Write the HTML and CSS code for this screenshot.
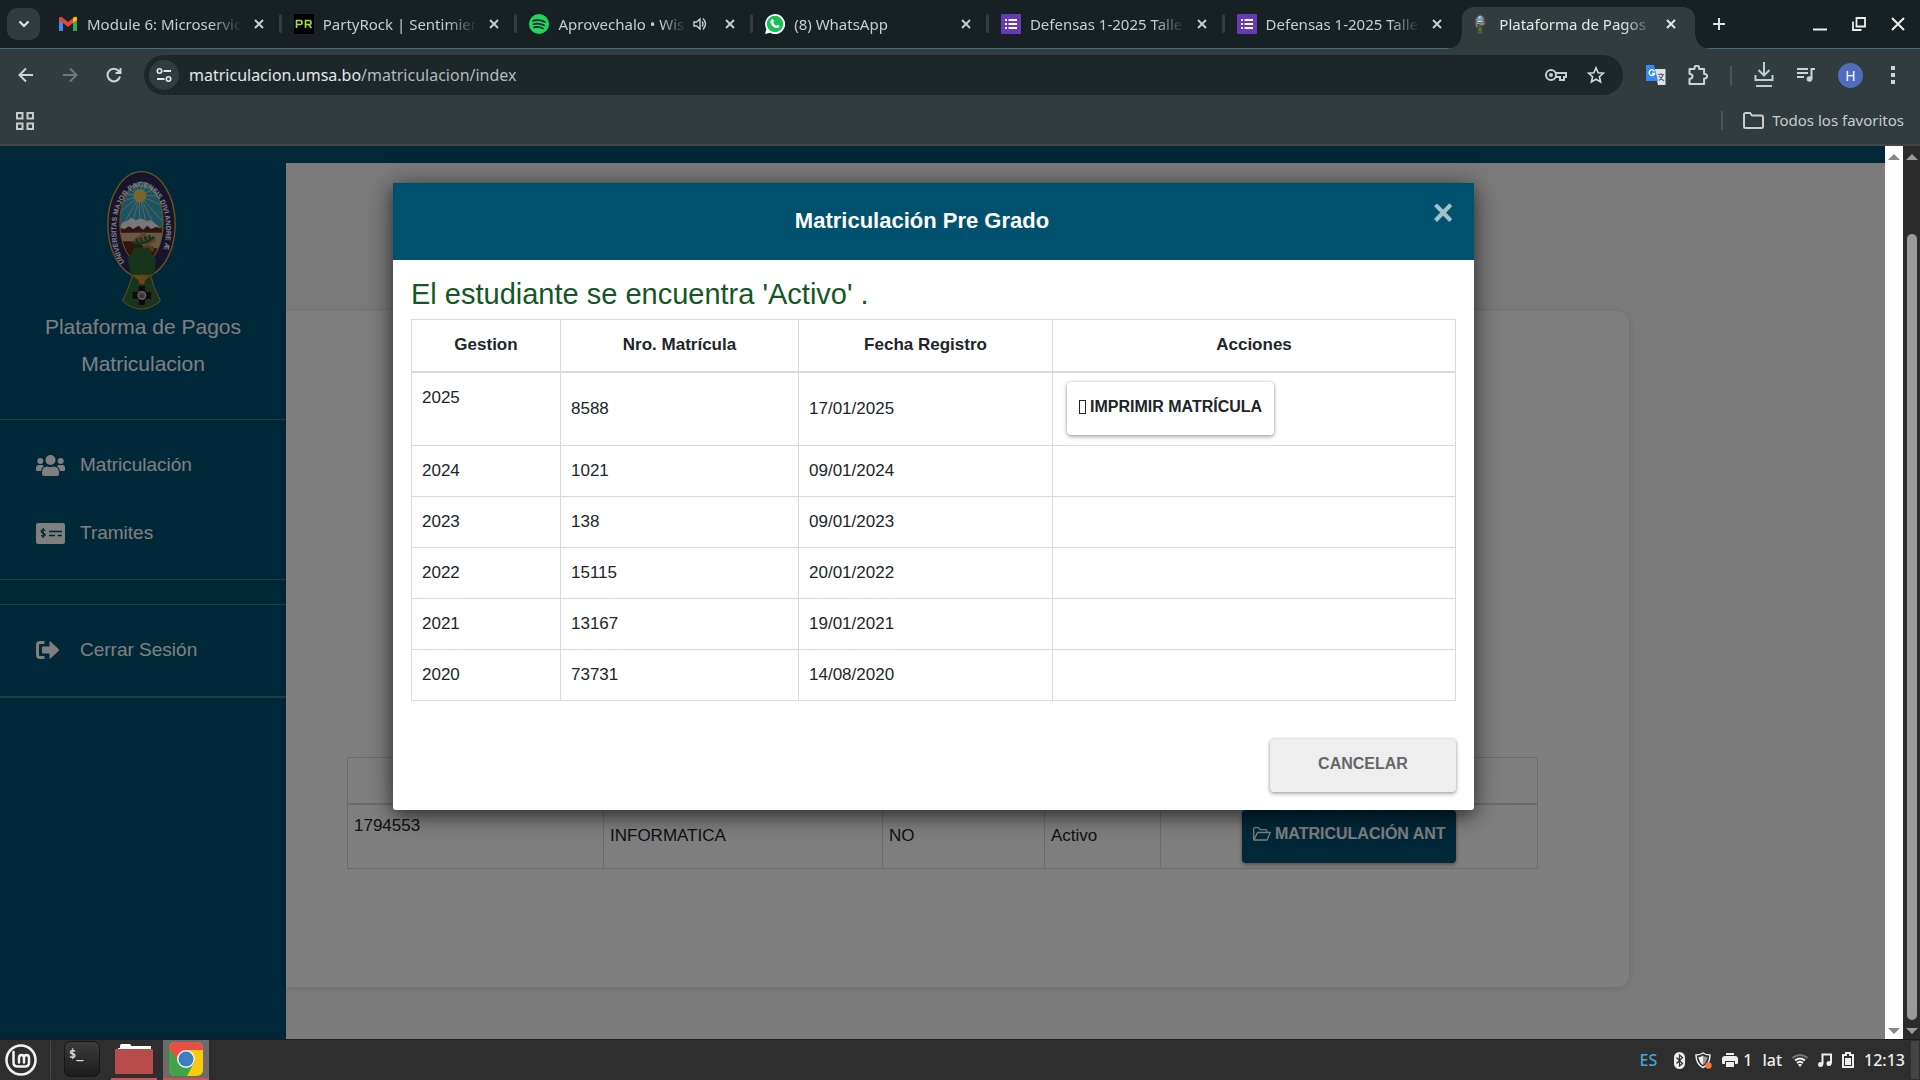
FILE: index.html
```html
<!DOCTYPE html>
<html lang="es">
<head>
<meta charset="utf-8">
<title>Plataforma de Pagos</title>
<link rel="stylesheet" href="styles.css">
</head>
<body>
<svg class="defs" aria-hidden="true">
  <symbol id="i-x" viewBox="0 0 10 10"><path d="M1 1l8 8M9 1l-8 8" stroke="currentColor" stroke-width="2" fill="none"/></symbol>
  <symbol id="i-forms" viewBox="0 0 20 20"><rect width="20" height="20" rx="1" fill="#673ab7"/><path d="M4 5h2v2H4zM7.500 5H16v2H7.500zM4 9h2v2H4zM7.500 9H16v2H7.500zM4 13h2v2H4zM7.500 13H16v2H7.500z" fill="#fff"/></symbol>
  <symbol id="i-crest" viewBox="0 0 206 417">
    <ellipse cx="103" cy="160" rx="101" ry="158" fill="#2f2a5c" stroke="#d8a93a" stroke-width="4"/>
    <clipPath id="oval"><ellipse cx="103" cy="155" rx="65" ry="122"/></clipPath>
    <g clip-path="url(#oval)">
      <rect x="30" y="30" width="150" height="140" fill="#3aa6c4"/>
      <path d="M98 74L30 30M98 74L60 20M98 74L82 20M98 74L112 20M98 74L135 20M98 74L170 40M98 74L180 75M98 74L180 110M98 74L165 150M98 74L140 160M98 74L118 160M98 74L96 160M98 74L75 160M98 74L52 155M98 74L30 130M98 74L25 98M98 74L25 65" stroke="#c9d8c0" stroke-width="2.500"/>
      <circle cx="98" cy="74" r="19" fill="#f0cf5a"/>
      <rect x="30" y="166" width="150" height="120" fill="#d9ae84"/>
      <path d="M30 178l14-22 16-7 12-8 14 9 16-8 14 8 16-3 18 14 14 8v16H30z" fill="#5e2b23"/>
      <path d="M36 170l10-16 14-5 12-9 14 8 16-6 14 7 16-2 18 15 14 10-18-4-14 6-12-10-12 12-14-12-16 10-12-8-14 8z" fill="#f1efee"/>
      <path d="M30 211h60l22 16 56 8v60H30z" fill="#5e2b23"/>
      <path d="M72 212l38-30 10 14 28 8-4 12-40 6z" fill="#b98a60"/>
      <path d="M78 215q34 8 64-18M92 214l-4-12M104 212l-4-12M116 208l-2-12M128 203l-2-10" stroke="#2c6a2c" stroke-width="8" fill="none"/>
      <path d="M102 232l16-12 22 6v16z" fill="#a5724d"/>
    </g>
    <ellipse cx="103" cy="155" rx="65" ry="122" fill="none" stroke="#d8a93a" stroke-width="3"/>
    <path id="ring" d="M52 274A75 130 0 1 1 152 274" fill="none"/>
    <text class="crest-text"><textPath href="#ring">UNIVERSITAS MAJOR PACENSIS DIVI ANDRE Æ</textPath></text>
    <path d="M60 262l8-8 14-24h44q6 12 10 26l10 6-4 46-32 6-36-2-2-4z" fill="#2d6b35"/>
    <path d="M76 313h54q8 36 30 77-58 48-114 0 18-36 30-77z" fill="#2d6b35" stroke="#c99b34" stroke-width="3"/>
    <path d="M76 314h54l-16 14-4 12H98l-4-12z" fill="#cf8a2e"/>
    <path d="M94 344h20v18h18v22h-18v18H94v-18H76v-22h18z" fill="#15151f" stroke="#c33" stroke-width="2" stroke-dasharray="5 9"/>
    <circle cx="104" cy="373" r="13" fill="#e8dcd0"/><circle cx="104" cy="373" r="10" fill="#5aa0b8"/><path d="M96 374q8-10 16 0l-3 7h-10z" fill="#b4552f"/>
  </symbol>
</svg>

<header class="browser">
  <div class="tabstrip">
    <button class="tab-search" aria-label="Buscar pestañas"><svg width="12" height="8" viewBox="0 0 12 8"><path d="M1.500 1.500L6 6l4.500-4.500" stroke="#e3e7e8" stroke-width="2.200" fill="none"/></svg></button>
    <nav class="tabs">
      <div class="tab"><svg class="fav" viewBox="0 0 20 20"><path d="M1 17V4l4 3v10z" fill="#4285f4"/><path d="M15 17V7l4-3v13z" fill="#34a853"/><path d="M1 4.500Q1 2 4 3.200L10 8l6-4.800Q19 2 19 4.500V6l-9 7-9-7z" fill="#ea4335"/><path d="M15 4l1-.800Q19 2 19 4.500V6l-4 3z" fill="#fbbc04"/></svg><span class="tab-title">Module 6: Microservic</span><button class="tab-x" aria-label="Cerrar"><svg><use href="#i-x"/></svg></button></div>
      <div class="tab"><svg class="fav" viewBox="0 0 20 20"><rect width="20" height="20" fill="#000"/><path d="M2.500 14V6.500h4q1.500 0 1.500 2t-1.500 2h-4M11.500 14V6.500h4q1.500 0 1.500 2t-1.500 2h-4M14.500 10.500l3 3.500" stroke="#a8e03c" stroke-width="1.600" fill="none"/></svg><span class="tab-title">PartyRock | Sentimien</span><button class="tab-x" aria-label="Cerrar"><svg><use href="#i-x"/></svg></button></div>
      <div class="tab"><svg class="fav" viewBox="0 0 20 20"><circle cx="10" cy="10" r="10" fill="#1ed760"/><path d="M4 6.800q6.500-1.800 12 1.200M4.500 10.200q5.500-1.500 10.500 1.100M5 13.400q4.500-1.200 9 1" stroke="#172124" stroke-width="1.700" fill="none" stroke-linecap="round"/></svg><span class="tab-title">Aprovechalo • Wis</span><svg class="audio" viewBox="0 0 14 14"><path d="M1 5h2.500L7 2v10L3.500 9H1zM9 4.500q2 2.500 0 5M10 1.500q5 5 0 11" stroke="#c7cdcf" stroke-width="1.400" fill="none"/></svg><button class="tab-x" aria-label="Cerrar"><svg><use href="#i-x"/></svg></button></div>
      <div class="tab"><svg class="fav" viewBox="0 0 20 20"><path d="M0 20l1.400-5A10 10 0 1 1 5 18.700z" fill="#fff"/><circle cx="10" cy="10" r="8.200" fill="#12c34f"/><path d="M6.500 5.500q1.500-1 2 .500l.500 1.500-.800 1.200q1 2 3 3l1.200-1 2 1q.500 2-2 2.300-5 .200-7-5.500-.200-2 1.100-3z" fill="#fff"/></svg><span class="tab-title">(8) WhatsApp</span><button class="tab-x" aria-label="Cerrar"><svg><use href="#i-x"/></svg></button></div>
      <div class="tab"><svg class="fav"><use href="#i-forms"/></svg><span class="tab-title">Defensas 1-2025 Talle</span><button class="tab-x" aria-label="Cerrar"><svg><use href="#i-x"/></svg></button></div>
      <div class="tab no-sep"><svg class="fav"><use href="#i-forms"/></svg><span class="tab-title">Defensas 1-2025 Talle</span><button class="tab-x" aria-label="Cerrar"><svg><use href="#i-x"/></svg></button></div>
      <div class="tab active"><svg class="fav"><use href="#i-crest"/></svg><span class="tab-title">Plataforma de Pagos</span><button class="tab-x" aria-label="Cerrar"><svg><use href="#i-x"/></svg></button></div>
    </nav>
    <button class="new-tab" aria-label="Nueva pestaña"><svg width="14" height="14" viewBox="0 0 14 14"><path d="M7 1v12M1 7h12" stroke="#d9dedf" stroke-width="2"/></svg></button>
    <div class="win-buttons">
      <button aria-label="Minimizar"><svg width="14" height="14" viewBox="0 0 14 14"><path d="M0 12.500h14" stroke="#eee" stroke-width="2"/></svg></button>
      <button aria-label="Restaurar"><svg width="14" height="14" viewBox="0 0 14 14"><path d="M4.500 1h8.500v8.500H4.500zM1 4.500V13h8.500" stroke="#eee" stroke-width="1.800" fill="none"/></svg></button>
      <button aria-label="Cerrar ventana"><svg width="14" height="14" viewBox="0 0 14 14"><path d="M1 1l12 12M13 1L1 13" stroke="#eee" stroke-width="2"/></svg></button>
    </div>
  </div>
  <div class="toolbar">
    <div class="nav-buttons">
      <button aria-label="Atrás"><svg width="16" height="16" viewBox="0 0 16 16"><path d="M15 8H2M8 1.500L1.500 8 8 14.500" stroke="#c8d6d8" stroke-width="2" fill="none"/></svg></button>
      <button aria-label="Adelante"><svg width="16" height="16" viewBox="0 0 16 16"><path d="M1 8h13M8 1.500L14.500 8 8 14.500" stroke="#6f787a" stroke-width="2" fill="none"/></svg></button>
      <button aria-label="Recargar"><svg width="16" height="16" viewBox="0 0 16 16"><path d="M14 9.500A6.300 6.300 0 1 1 12.700 4L14 5.500M14.500 1v5h-5" stroke="#c8d6d8" stroke-width="2" fill="none"/></svg></button>
    </div>
    <div class="omnibox">
      <button class="site-info" aria-label="Información del sitio"><svg width="16" height="16" viewBox="0 0 16 16"><path d="M7.500 4H15M1 12h7.500" stroke="#e3e7e8" stroke-width="1.800"/><circle cx="3.500" cy="4" r="2.200" stroke="#e3e7e8" stroke-width="1.600" fill="none"/><circle cx="12.500" cy="12" r="2.200" stroke="#e3e7e8" stroke-width="1.600" fill="none"/></svg></button>
      <a class="url" href="#">matriculacion.umsa.bo<span>/matriculacion/index</span></a>
      <svg width="22" height="14" viewBox="0 0 22 14"><circle cx="6" cy="7" r="5" stroke="#c7cdcf" stroke-width="2" fill="none"/><circle cx="6" cy="7" r="2" fill="#c7cdcf"/><path d="M10.500 5H21v4h-2v3h-4V9h-4.500" stroke="#c7cdcf" stroke-width="2" fill="none"/></svg>
      <svg width="18" height="18" viewBox="0 0 18 18"><path d="M9 1.800l2.100 4.900 5.300.500-4 3.500 1.200 5.200L9 13.200l-4.600 2.700 1.200-5.200-4-3.500 5.300-.500z" stroke="#d5dadb" stroke-width="1.600" fill="none"/></svg>
    </div>
    <div class="tools">
      <svg width="20" height="20" viewBox="0 0 20 20"><path d="M8 4h11.500v16H12z" fill="#dfe3e6"/><path d="M0 0h8l4 16H0z" fill="#2f8cf0"/><path d="M8.500 6.500A2.800 2.800 0 1 0 8.600 8.500H6" stroke="#fff" stroke-width="1.400" fill="none"/><path d="M12 9.500h6M15 8v1.500M17 9.500q-1 4-4 6M13 11q2 3 5 5" stroke="#667" stroke-width="1.200" fill="none"/></svg>
      <svg width="20" height="20" viewBox="0 0 20 20"><path d="M1.500 4h5V3a2.300 2.300 0 0 1 4.600 0v1h5v5h.700a2.300 2.300 0 0 1 0 4.600h-.700V19H1.500v-5q3-.500 3-2.700T1.500 8.700z" stroke="#c8d6d8" stroke-width="2" fill="none" stroke-linejoin="round"/></svg>
      <i class="bar"></i>
      <svg width="20" height="26" viewBox="0 0 20 26"><path d="M10 0v13M4.500 8l5.500 5.500L15.500 8M1.500 13v5h17v-5M2 24h16" stroke="#b9cfd4" stroke-width="2" fill="none"/></svg>
      <svg width="20" height="16" viewBox="0 0 20 16"><path d="M1 2h11M1 6h11M1 10h7" stroke="#c8d6d8" stroke-width="2"/><path d="M15.500 12V2H19" stroke="#c8d6d8" stroke-width="2" fill="none"/><circle cx="13.500" cy="12" r="2.800" fill="#c8d6d8"/></svg>
      <span class="avatar">H</span>
      <svg class="more" width="4" height="18" viewBox="0 0 4 18"><path d="M0 0h4v4H0zM0 7h4v4H0zM0 14h4v4H0z" fill="#c8d6d8"/></svg>
    </div>
  </div>
  <div class="bookmarks">
    <svg width="18" height="18" viewBox="0 0 18 18"><path d="M1 1h5.500v5.500H1zM11.500 1H17v5.500h-5.500zM1 11.500h5.500V17H1zM11.500 11.500H17V17h-5.500z" stroke="#c7cdcf" stroke-width="2" fill="none"/></svg>
    <a class="all-favs" href="#"><svg width="21" height="17" viewBox="0 0 21 17"><path d="M1 14.500V2.500Q1 1 2.500 1H7l2 2.500h9.500q1.500 0 1.500 1.500v9.500q0 1.500-1.500 1.500h-16Q1 16 1 14.500z" stroke="#c7cdcf" stroke-width="2" fill="none"/></svg>Todos los favoritos</a>
  </div>
</header>

<div class="viewport">
  <div class="page">
    <div class="topbar"></div>
    <div class="columns">
      <aside class="sidebar">
        <div class="brand">
          <svg class="crest"><use href="#i-crest"/></svg>
          <span>Plataforma de Pagos<br>Matriculacion</span>
        </div>
        <nav class="menu">
          <a href="#"><svg width="29" height="21" viewBox="0 0 29 21"><g fill="#fff"><circle cx="14.500" cy="5" r="5"/><circle cx="4.300" cy="6" r="3"/><circle cx="24.700" cy="6" r="3"/><path d="M6 17.500q0-6 5.500-6 3 1.200 6 0 5.500 0 5.500 6V19q0 2-2 2H8q-2 0-2-2zM0 13q0-3 3-3h3.500l1.500 1.200Q5.500 12.500 5 16H1q-1 0-1-1zM29 13q0-3-3-3h-3.500L21 11.200q2.500 1.300 3 4.800h4q1 0 1-1z"/></g></svg>Matriculación</a>
          <a href="#"><svg width="29" height="21" viewBox="0 0 29 21"><rect width="29" height="21" rx="2" fill="#fff"/><path d="M13 8.500h13M13 12.500h6M21.500 12.500H26M9.300 7.500Q7 6.200 5.500 7.500q-1 1.600 1.500 2.500 2.800 1 1.800 2.500-1.600 1.300-3.800 0M7.200 5v10" stroke="#005170" stroke-width="1.400" fill="none"/></svg>Tramites</a>
        </nav>
        <nav class="menu session">
          <a href="#"><svg width="29" height="18" viewBox="0 0 29 18"><path d="M8.500 1.500H4Q1.500 1.500 1.500 4v10q0 2.500 2.500 2.500h4.500" stroke="#fff" stroke-width="3" fill="none"/><path d="M7 5.500h6.500V1q0-1 1-.500l8 7.500q1 1 0 2l-8 7.500q-1 .500-1-.500v-4.500H7q-1 0-1-1v-5q0-1 1-1z" fill="#fff"/></svg>Cerrar Sesión</a>
        </nav>
      </aside>
      <main class="main">
        <section class="card">
          <table class="careers">
            <colgroup><col class="k1"><col class="k2"><col class="k3"><col class="k4"><col class="k5"></colgroup>
            <thead><tr><th></th><th></th><th></th><th></th><th></th></tr></thead>
            <tbody><tr><td class="top">1794553</td><td>INFORMATICA</td><td>NO</td><td>Activo</td><td class="act"><button class="btn btn-primary"><svg width="18" height="14" viewBox="0 0 18 14"><path d="M.700 12.500v-11l.800-.800h4l1.500 2h6l.800.800V5.500M.900 13l3.600-7.500H17.300L14 13z" stroke="#fff" stroke-width="1.300" fill="none" stroke-linejoin="round"/></svg>MATRICULACIÓN ANT</button></td></tr></tbody>
          </table>
        </section>
      </main>
    </div>
    <div class="backdrop">
      <section class="modal" role="dialog" aria-labelledby="modal-title">
        <header class="modal-head">
          <h4 id="modal-title">Matriculación Pre Grado</h4>
          <button class="close" aria-label="Cerrar">×</button>
        </header>
        <div class="modal-body">
          <h3 class="status">El estudiante se encuentra 'Activo' .</h3>
          <table class="history">
            <colgroup><col class="c1"><col class="c2"><col class="c3"><col class="c4"></colgroup>
            <thead><tr><th>Gestion</th><th>Nro. Matrícula</th><th>Fecha Registro</th><th>Acciones</th></tr></thead>
            <tbody>
              <tr><td class="top">2025</td><td>8588</td><td>17/01/2025</td><td class="act"><button class="btn btn-white"><i class="glyph"></i>IMPRIMIR MATRÍCULA</button></td></tr>
              <tr><td>2024</td><td>1021</td><td>09/01/2024</td><td></td></tr>
              <tr><td>2023</td><td>138</td><td>09/01/2023</td><td></td></tr>
              <tr><td>2022</td><td>15115</td><td>20/01/2022</td><td></td></tr>
              <tr><td>2021</td><td>13167</td><td>19/01/2021</td><td></td></tr>
              <tr><td>2020</td><td>73731</td><td>14/08/2020</td><td></td></tr>
            </tbody>
          </table>
        </div>
        <footer class="modal-foot"><button class="btn btn-cancel">CANCELAR</button></footer>
      </section>
    </div>
  </div>
  <div class="scroll light"><i class="up"></i><i class="down"></i></div>
  <div class="scroll dark"><i class="up"></i><i class="thumb"></i><i class="down"></i></div>
</div>

<footer class="taskbar">
  <svg class="mint" width="34" height="34" viewBox="0 0 34 34"><circle cx="17" cy="17" r="14.500" stroke="#f2f2f2" stroke-width="2.500" fill="none"/><path d="M9.500 9v10.500q0 4 4 4h7.500q4 0 4-4V15q0-3-2.500-3T20 15v4.500M20 15q0-3-2.500-3T15 15v4.500" stroke="#f2f2f2" stroke-width="2.500" fill="none" stroke-linecap="round"/></svg>
  <i class="task-sep"></i>
  <div class="apps">
    <button class="app" aria-label="Terminal"><svg width="36" height="36" viewBox="0 0 36 36"><defs><linearGradient id="tg" x2="0" y2="1"><stop stop-color="#3d3d3d"/><stop offset="1" stop-color="#1b1b1b"/></linearGradient></defs><rect x=".500" y=".500" width="35" height="35" rx="6" fill="url(#tg)" stroke="#161616"/><text x="5" y="17" class="prompt">$_</text></svg></button>
    <button class="app running" aria-label="Archivos"><svg width="38" height="32" viewBox="0 0 38 32"><path d="M5 2.500L6 1h9l1.500 2H36v6H3V5h2z" fill="#fff"/><rect y="6" width="38" height="25" rx="1" fill="#b84c4a"/></svg></button>
    <button class="app running current" aria-label="Chrome"><svg width="34" height="34" viewBox="0 0 34 34"><clipPath id="sq"><rect width="34" height="34" rx="6"/></clipPath><g clip-path="url(#sq)"><rect width="34" height="34" fill="#fbcb0a"/><path d="M0 6v28h18l8-15-9-2z" fill="#3fa548"/><path d="M0 0h34v8H17L10 20 0 6z" fill="#ea4f43"/><circle cx="17" cy="17" r="9" fill="#f4f4f4"/><circle cx="17" cy="17" r="7.500" fill="#3c7fc0"/></g></svg></button>
  </div>
  <div class="tray">
    <span class="lang">ES</span>
    <svg width="11" height="17" viewBox="0 0 11 17"><rect width="11" height="17" rx="5.500" fill="#eee"/><path d="M2.500 5.500l6 6-3 2.500V3l3 2.500-6 6" stroke="#2e2e2e" stroke-width="1.200" fill="none"/></svg>
    <svg width="17" height="17" viewBox="0 0 17 17"><path d="M8 1q3 2 7 2 0 9-7 12.500Q1 12 1 3q4 0 7-2z" stroke="#eee" stroke-width="1.500" fill="none"/><path d="M8 3.500v9.500Q4 10 3.500 5 6 5 8 3.500z" fill="#eee"/><path d="M8 3.500V13q4-3 4.500-8Q10 5 8 3.500z" fill="#999"/><circle cx="13.500" cy="13.500" r="3.200" fill="#f47a3c"/></svg>
    <span class="printer"><svg width="16" height="14" viewBox="0 0 16 14"><path d="M4 0h8v2H4zM0 6q0-3 3-3h10q3 0 3 3v4q0 1-1 1h-2V8H3v3H1q-1 0-1-1zM4 9h8v5H4z" fill="#eee"/></svg>1</span>
    <span>lat</span>
    <svg width="16" height="13" viewBox="0 0 16 13"><path d="M.500 4Q8-2 15.500 4" stroke="#777" stroke-width="2" fill="none"/><path d="M3 6.500q5-4 10 0M5 9q3-2.500 6 0" stroke="#eee" stroke-width="1.800" fill="none"/><path d="M6 10.500q2-1.500 4 0L8 13z" fill="#eee"/></svg>
    <svg width="14" height="14" viewBox="0 0 14 14"><path d="M4.500 11.500V1.500h8.500v9" stroke="#eee" stroke-width="2" fill="none"/><circle cx="2.500" cy="11.500" r="2.500" fill="#eee"/><circle cx="11" cy="10.500" r="2.500" fill="#eee"/></svg>
    <svg width="12" height="16" viewBox="0 0 12 16"><path d="M1 3h3V1h4v2h3v12H1z" stroke="#eee" stroke-width="2" fill="none"/><path d="M3 6h6v7H3z" fill="#eee"/></svg>
    <time>12:13</time>
  </div>
  <i class="show-desktop"></i>
</footer>
</body>
</html>
```
FILE: styles.css
```css
* { box-sizing: border-box; }
body { margin: 0; height: 100vh; display: flex; flex-direction: column; overflow: hidden; background: #2e2e2e; font-family: "Liberation Sans", Arial, sans-serif; }
button { flex: none; padding: 0; border: 0; background: none; font: inherit; color: inherit; display: flex; align-items: center; justify-content: center; }
a { color: inherit; text-decoration: none; }
svg { flex: none; display: block; }
.defs { position: absolute; width: 0; height: 0; }

/* browser chrome */
.browser { flex: none; background: #323c3f; color: #c7cdcf; font-family: "Noto Sans", sans-serif; border-bottom: 2px solid #454545; }
.tabstrip { height: 49px; display: flex; align-items: flex-start; background: #172124; border-bottom: 1px solid #3b6f86; }
.tab-search { width: 33px; height: 32px; margin: 8px 5px 0 7px; border-radius: 10px; background: #323c3f; }
.tabs { flex: 1; min-width: 0; display: flex; height: 49px; }
.tab { position: relative; flex: 1; min-width: 0; display: flex; align-items: center; padding: 0 17px 1px 13px; font-size: 15px; }
.tab::after { content: ""; position: absolute; right: -1px; top: 14px; width: 3px; height: 19px; border-radius: 2px; background: #323c3f; }
.tab.no-sep::after { display: none; }
.fav { width: 20px; height: 20px; margin-right: 9px; }
.tab-title { flex: 1; min-width: 0; overflow: hidden; white-space: nowrap; line-height: 24px; -webkit-mask-image: linear-gradient(90deg, #000 80%, transparent); mask-image: linear-gradient(90deg, #000 80%, transparent); }
.audio { width: 14px; height: 14px; margin-left: 6px; }
.audio + .tab-x { margin-left: 18px; }
.tab-x { width: 10px; height: 10px; margin-left: 12px; }
.tab-x svg { width: 10px; height: 10px; }
.tab.active { height: 42px; margin-top: 7px; padding: 0 19px 8px 8px; margin-left: 3px; margin-right: 5px; border-radius: 12px 12px 0 0; background: #323c3f; color: #e3e7e8; }
.tab.active::before, .tab.active::after { content: ""; position: absolute; top: auto; bottom: 0; width: 14px; height: 14px; border-radius: 0; background: radial-gradient(circle at 0 0, transparent 13px, #323c3f 14px); }
.tab.active::before { left: -14px; }
.tab.active::after { left: auto; right: -14px; background: radial-gradient(circle at 100% 0, transparent 13px, #323c3f 14px); }
.new-tab { width: 38px; height: 48px; }
.win-buttons { flex: none; display: flex; gap: 25px; height: 48px; padding: 0 15px 0 75px; }
.toolbar { display: flex; align-items: center; height: 52px; padding-right: 25px; }
.nav-buttons { display: flex; gap: 28px; width: 144px; padding-left: 18px; }
.omnibox { flex: 1; display: flex; align-items: center; gap: 20px; height: 40px; padding: 0 18px 0 5px; border-radius: 20px; background: #1d272a; }
.site-info { width: 30px; height: 30px; border-radius: 15px; background: #323c3f; }
.url { flex: 1; margin-left: -10px; font-size: 16px; color: #e3e7e8; }
.url span { color: #b3babc; }
.tools { display: flex; align-items: center; gap: 22px; padding-left: 23px; }
.bar { width: 2px; height: 19px; background: #4b5558; }
.avatar { width: 25px; height: 25px; border-radius: 50%; background: #4e6ebd; color: #fff; font-size: 14px; line-height: 25px; text-align: center; }
.more { margin-left: 6px; }
.bookmarks { display: flex; align-items: center; justify-content: space-between; height: 43px; padding: 0 16px 4px; }
.all-favs { display: flex; align-items: center; gap: 8px; padding-left: 20px; border-left: 2px solid #4b5558; font-size: 15px; line-height: 19px; }

/* web page */
.viewport { flex: 1; min-height: 0; display: flex; }
.page { position: relative; flex: 1; display: flex; flex-direction: column; min-width: 0; overflow: hidden; background: #f7f7f7; color: #212529; font-size: 17px; }
.topbar { flex: none; height: 17px; background: #005170; }
.columns { flex: 1; min-height: 0; display: flex; }
.sidebar { flex: none; width: 286px; background: #005170; color: #fff; }
.brand { display: flex; flex-direction: column; align-items: center; padding: 8px 0 37px; border-bottom: 1px solid #3b7c93; font-size: 21px; line-height: 37px; text-align: center; }
.crest { width: 69px; height: 139px; margin-right: 3px; margin-bottom: -2px; }
.crest-text { font: bold 21px "Liberation Sans", Arial, sans-serif; fill: #fff; }
.menu { padding: 11px 0 12px; border-bottom: 1px solid #3b7c93; font-size: 19px; }
.menu a { display: flex; align-items: center; gap: 15px; height: 68px; padding-left: 36px; }
.session { margin-top: 24px; border-top: 1px solid #3b7c93; border-bottom-width: 2px; }
.main { flex: 1; padding-top: 148px; }
.card { margin-right: 16%; padding: 446px 91px 118px 61px; border-radius: 0 12px 12px 0; background: #fff; box-shadow: 0 1px 8px rgba(0, 0, 0, .12); }
table { width: 100%; border-collapse: collapse; table-layout: fixed; }
th, td { border: 1px solid #d9d9d9; text-align: left; }
th { text-align: center; border-bottom-width: 2px; }
.careers th { height: 46px; }
.careers td { height: 65px; padding: 0 6px; }
.careers td.top, .history td.top { vertical-align: top; line-height: 20px; }
.careers td.top { padding-top: 11px; }
.k1 { width: 256px; } .k2 { width: 279px; } .k3 { width: 162px; } .k4 { width: 116px; }
.careers .act { padding-left: 81px; }
.btn { border-radius: 4px; height: 53px; padding-bottom: 4px; font-size: 16px; font-weight: bold; white-space: nowrap; box-shadow: 0 2px 4px rgba(0, 0, 0, .3), 0 0 3px rgba(0, 0, 0, .2); }
.btn-primary { gap: 4px; padding-left: 11px; padding-right: 10px; background: #005170; color: #fff; }
.btn-white { gap: 4px; padding-left: 12px; padding-right: 12px; background: #fff; }
.glyph { width: 7px; height: 14px; border: 1px solid #212529; }

/* dialog */
.backdrop { position: absolute; inset: 0; display: flex; align-items: flex-start; justify-content: center; padding-top: 37px; padding-right: 18px; background: rgba(0, 0, 0, .5); }
.modal { width: 1081px; border-radius: 0 0 3px 3px; background: #fff; box-shadow: 0 6px 16px rgba(0, 0, 0, .4), 0 3px 30px rgba(0, 0, 0, .4); }
.modal-head { display: flex; align-items: flex-start; height: 77px; padding: 18px 17px 0 22px; background: #00516e; color: #fff; }
.modal-head h4 { flex: 1; margin: 0; font-size: 22px; line-height: 40px; text-align: center; }
.close { width: 28px; height: 24px; color: #a3c1cc; font-size: 36px; font-weight: bold; line-height: 24px; }
.modal-body { padding: 17px 18px 18px; }
.status { margin: 0 0 8px; font-size: 29px; font-weight: normal; line-height: 34px; color: #155724; }
.history th { height: 52px; }
.history td { height: 51px; padding: 0 10px; }
.history td.top { padding-top: 15px; }
.history .act { height: 74px; padding-left: 14px; }
.c1 { width: 149px; } .c2 { width: 238px; } .c3 { width: 254px; }
.modal-foot { display: flex; justify-content: flex-end; padding: 20px 18px 18px; }
.btn-cancel { width: 186px; background: #eee; color: #666; }

.scroll { position: relative; flex: none; display: flex; flex-direction: column; justify-content: space-between; align-items: center; padding: 8px 0 5px; }
.scroll i { border: 6px solid transparent; }
.scroll .up { border-top: 0; border-bottom-color: #888; }
.scroll .down { border-bottom: 0; border-top-color: #888; }
.scroll.light { width: 18px; background: #fdfdfd; }
.scroll.dark { width: 17px; background: #2c2c2c; }
.scroll.dark .up { border-bottom-color: #9a9a9a; }
.scroll.dark .down { border-top-color: #9a9a9a; }
.scroll .thumb { flex: 1; width: 10px; margin: 74px 0 8px; border: 0; border-radius: 5px; background: #9a9a9a; }

/* desktop panel */
.taskbar { flex: none; height: 41px; display: flex; align-items: center; border-top: 1px solid #1c1c1c; background: #2e2e2e; color: #eee; font: 500 16px "Noto Sans", sans-serif; }
.mint { margin-left: 4px; }
.task-sep { width: 1px; height: 38px; margin: 0 8px 0 12px; background: #484848; }
.apps { display: flex; gap: 6px; height: 40px; }
.app { width: 46px; height: 40px; border-bottom: 2px solid transparent; }
.app.running { border-color: #c85654; }
.app.current { background: #6b6b6b; }
.prompt { font: bold 12px "DejaVu Sans Mono", monospace; fill: #ddd; }
.tray { margin-left: auto; display: flex; align-items: center; gap: 10px; }
.lang { margin-right: 7px; color: #4aa3d6; }
.printer { display: flex; align-items: center; gap: 5px; }
.show-desktop { width: 8px; height: 38px; margin: 0 1px 0 6px; background: #444; }
```
